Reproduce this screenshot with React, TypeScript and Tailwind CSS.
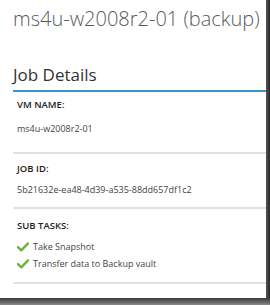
function Field({ label, value, box, gap }: { label: string; value: string; box: string; gap: string }) {
  return (
    <div className={`border-b-2 border-[#e1e1e1] px-[4px] ${box}`}>
      <div className="text-[9.5px] leading-[14px] font-semibold text-[#222]">{label}</div>
      <div className={`text-[9px] leading-[14px] text-[#444] ${gap}`}>{value}</div>
    </div>
  );
}

function GreenCheck() {
  return (
    <svg width="12" height="10" viewBox="0 0 12 10" className="shrink-0">
      <path d="M1 5.2 L4.3 8.4 L11 1.4" fill="none" stroke="#6cb33e" strokeWidth="2.4" strokeLinecap="round" strokeLinejoin="round" />
    </svg>
  );
}

export default function App() {
  const tasks = ["Take Snapshot", "Transfer data to Backup vault"];

  return (
    <div className="flex h-[305px] w-[270px] flex-col overflow-hidden bg-white font-[family-name:'Open_Sans',sans-serif]">
      <div className="flex flex-1">
        <div className="flex-1 pl-[13px]">
          <h1 className="pt-[5px] whitespace-nowrap text-[20px] leading-[28px] font-light text-[#5a5a5a]">
            ms4u-w2008r2-01 (backup)
          </h1>
          <h2 className="mt-[30px] border-b-2 border-[#3a95cf] pb-[3px] text-[17px] leading-[24px] text-[#333]">
            Job Details
          </h2>
          <Field label="VM NAME:" value="ms4u-w2008r2-01" box="pt-[6px] pb-[16px]" gap="mt-[10px]" />
          <Field label="JOB ID:" value="5b21632e-ea48-4d39-a535-88dd657df1c2" box="pt-[8px] pb-[10px]" gap="mt-[7px]" />
          <div className="border-b-2 border-[#e1e1e1] px-[4px] pt-[10px] pb-[11px]">
            <div className="text-[9.5px] leading-[14px] font-semibold text-[#222]">SUB TASKS:</div>
            <ul className="mt-[7px] flex flex-col gap-[3px]">
              {tasks.map((t) => (
                <li key={t} className="flex items-center gap-[4px] text-[9px] leading-[14px] text-[#444]">
                  <GreenCheck />
                  {t}
                </li>
              ))}
            </ul>
          </div>
        </div>
        <div className="w-[4px] bg-gradient-to-r from-[#555] to-[#2a2a2a]" />
      </div>
      <div className="h-[7px] shrink-0 bg-gradient-to-b from-[#3a3a3a] to-[#8a8a8a]" />
    </div>
  );
}
